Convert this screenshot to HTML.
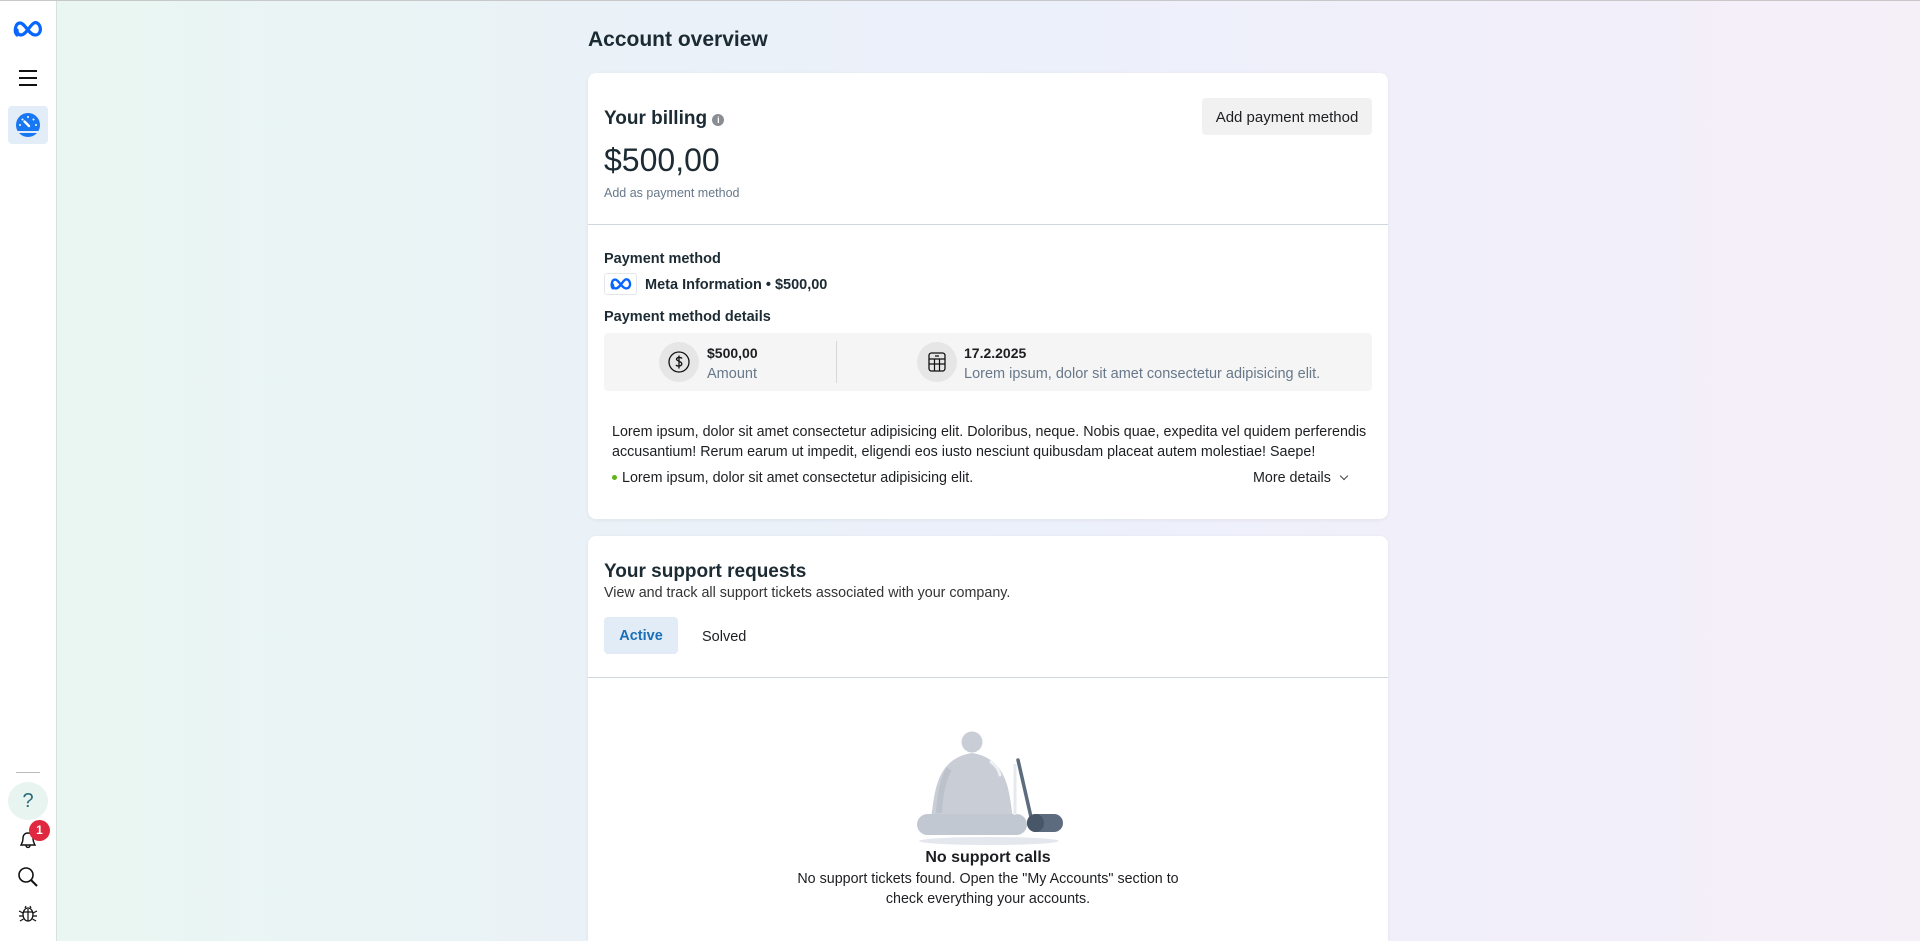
<!DOCTYPE html>
<html><head><meta charset="utf-8">
<style>
*{box-sizing:border-box;margin:0;padding:0}
html{width:1920px;height:941px;overflow:hidden}
body{width:1920px;height:941px;overflow:hidden;font-family:"Liberation Sans","DejaVu Sans",sans-serif;color:#1c1e21;position:relative;
background:linear-gradient(90deg,#e9f7f1 0%,#eaf1f8 35%,#ecf0fb 55%,#f2effa 80%,#f5eff8 100%);}
.topline{position:absolute;left:0;top:0;width:1920px;height:1px;background:#c8c8c8}
.side{position:absolute;left:0;top:1px;width:57px;height:940px;background:#fff;border-right:1px solid #d6e2de}
.abs{position:absolute}
.card{position:absolute;left:588px;width:800px;background:#fff;border-radius:8px;box-shadow:0 1px 4px rgba(0,0,0,.06)}
.t{position:absolute;white-space:nowrap}
.c1 .t{margin-top:2px}
</style></head><body>
<div class="topline"></div>
<div class="side">
  <svg class="abs" style="left:13px;top:19px" width="30" height="18" viewBox="0 0 30 18"><path d="M4 15 C1 12 2 3 7 3 C12 3 16 15 22 15 C27 15 28 10 27 7 C26 3 23 2 21 3 C17 5 13 15 8 15 C5 15 4 12 4 10" fill="none" stroke="#0866ff" stroke-width="3.2" stroke-linecap="round"/></svg>
  <div class="abs" style="left:19px;top:69px;width:18px;height:2px;background:#111"></div>
  <div class="abs" style="left:19px;top:76px;width:18px;height:2px;background:#111"></div>
  <div class="abs" style="left:19px;top:83px;width:18px;height:2px;background:#111"></div>
  <div class="abs" style="left:8px;top:105px;width:40px;height:38px;background:#e3edf8;border-radius:4px"></div>
  <svg class="abs" style="left:15px;top:111px" width="26" height="26" viewBox="0 0 26 26"><circle cx="13" cy="13" r="12" fill="#1877f2"/><rect x="1" y="19" width="24" height="2" fill="#e3edf8"/><g fill="#fff"><circle cx="13" cy="5" r="1"/><circle cx="7.5" cy="7.5" r="1"/><circle cx="18.5" cy="7.5" r="1"/><circle cx="5" cy="13" r="1"/><circle cx="21" cy="13" r="1"/></g><path d="M9.5 9.5 L14 14" stroke="#fff" stroke-width="2.4" stroke-linecap="round"/></svg>
  <div class="abs" style="left:16px;top:771px;width:24px;height:1px;background:#bbb"></div>
  <div class="abs" style="left:8px;top:781px;width:40px;height:38px;background:#e7f4f0;border-radius:50%;color:#2b6c7a;font-size:20px;text-align:center;line-height:38px">?</div>
  <svg class="abs" style="left:17px;top:828px" width="22" height="22" viewBox="0 0 22 22"><path d="M4 16 C5 14 6 13 6 9 C6 6 8 4 11 4 C14 4 16 6 16 9 C16 13 17 14 18 16 Z M9 16.5 C9 19 13 19 13 16.5" fill="none" stroke="#111" stroke-width="1.4"/></svg>
  <div class="abs" style="left:29px;top:819px;width:21px;height:21px;border-radius:50%;background:#e0283e;color:#fff;font-size:12px;font-weight:bold;text-align:center;line-height:21px">1</div>
  <svg class="abs" style="left:16px;top:864px" width="24" height="24" viewBox="0 0 24 24"><circle cx="10" cy="10" r="7" fill="none" stroke="#111" stroke-width="1.6"/><path d="M15 15 L21 21" stroke="#111" stroke-width="2"/></svg>
  <svg class="abs" style="left:17px;top:901px" width="22" height="22" viewBox="0 0 22 22"><ellipse cx="11" cy="12.5" rx="5" ry="6.5" fill="none" stroke="#111" stroke-width="1.3"/><path d="M11 7 V19 M6 10 H16 M8 6 L9 4 M14 6 L13 4 M6 11 L2 9 M16 11 L20 9 M6 14 H2 M16 14 H20 M6.5 17 L3 19 M15.5 17 L19 19" stroke="#111" stroke-width="1.2" fill="none"/></svg>
</div>

<div class="t" style="left:588px;top:28px;font-size:21px;font-weight:bold;color:#1c2b33">Account overview</div>

<div class="card c1" style="top:73px;height:446px">
  <div class="t" style="left:16px;top:33px;font-size:19px;font-weight:bold;color:#1c2b33">Your billing <span style="display:inline-block;width:12px;height:12px;border-radius:50%;background:#8a8d91;vertical-align:1px;color:#fff;font-size:9px;text-align:center;line-height:12px">i</span></div>
  <div style="position:absolute;left:614px;top:25px;width:170px;height:37px;background:#f1f1f1;border-radius:4px;font-size:15px;text-align:center;line-height:39px">Add payment method</div>
  <div class="t" style="left:16px;top:67px;font-size:32px;color:#1c2b33">$500,00</div>
  <div class="t" style="left:16px;top:111px;font-size:12.5px;color:#67788a">Add as payment method</div>
  <div style="position:absolute;left:0;top:151px;width:800px;height:1px;background:#cfd6dd"></div>
  <div class="t" style="left:16px;top:176px;font-size:14.5px;font-weight:bold;color:#1c2b33">Payment method</div>
  <div style="position:absolute;left:16px;top:200px;width:33px;height:22px;border:1px solid #e4e6eb;border-radius:3px"></div>
  <svg class="abs" style="left:22px;top:204px" width="22" height="14" viewBox="0 0 30 18"><path d="M4 15 C1 12 2 3 7 3 C12 3 16 15 22 15 C27 15 28 10 27 7 C26 3 23 2 21 3 C17 5 13 15 8 15 C5 15 4 12 4 10" fill="none" stroke="#0866ff" stroke-width="3.2" stroke-linecap="round"/></svg>
  <div class="t" style="left:57px;top:202px;font-size:14.5px;font-weight:bold;color:#1c2b33">Meta Information • $500,00</div>
  <div class="t" style="left:16px;top:234px;font-size:14.5px;font-weight:bold;color:#1c2b33">Payment method details</div>
  <div style="position:absolute;left:16px;top:260px;width:768px;height:58px;background:#f5f5f5;border-radius:4px">
    <div style="position:absolute;left:55px;top:9px;width:40px;height:40px;border-radius:50%;background:#e6e6e6"></div>
    <svg class="abs" style="left:63px;top:17px" width="24" height="24" viewBox="0 0 24 24"><circle cx="12" cy="12" r="10" fill="none" stroke="#111" stroke-width="1.3"/><path d="M15 8.5 C14 7 10 7 9.5 9 C9 11 15 11 14.8 14 C14.5 16.5 10 16.5 9 15 M12 5.5 V18.5" fill="none" stroke="#111" stroke-width="1.3"/></svg>
    <div class="t" style="left:103px;top:10px;font-size:14px;font-weight:bold">$500,00</div>
    <div class="t" style="left:103px;top:31px;font-size:14.5px;color:#67788a">Amount</div>
    <div style="position:absolute;left:232px;top:8px;width:1px;height:42px;background:#d8d8d8"></div>
    <div style="position:absolute;left:313px;top:9px;width:40px;height:40px;border-radius:50%;background:#e6e6e6"></div>
    <svg class="abs" style="left:322px;top:18px" width="22" height="22" viewBox="0 0 22 22"><rect x="3" y="2" width="16" height="18" rx="2.5" fill="none" stroke="#111" stroke-width="1.3"/><path d="M3 8 H19 M3 13 H19 M8.5 8 V20 M13.5 8 V20 M9 5 H13" stroke="#111" stroke-width="1.2" fill="none"/></svg>
    <div class="t" style="left:360px;top:10px;font-size:14px;font-weight:bold">17.2.2025</div>
    <div class="t" style="left:360px;top:31px;font-size:14.5px;color:#67788a">Lorem ipsum, dolor sit amet consectetur adipisicing elit.</div>
  </div>
  <div class="t" style="left:24px;top:347px;font-size:14.3px;line-height:20px">Lorem ipsum, dolor sit amet consectetur adipisicing elit. Doloribus, neque. Nobis quae, expedita vel quidem perferendis<br>accusantium! Rerum earum ut impedit, eligendi eos iusto nesciunt quibusdam placeat autem molestiae! Saepe!</div>
  <div style="position:absolute;left:24px;top:402px;width:5px;height:5px;border-radius:50%;background:#5fb319"></div>
  <div class="t" style="left:34px;top:395px;font-size:14.3px">Lorem ipsum, dolor sit amet consectetur adipisicing elit.</div>
  <div class="t" style="left:665px;top:395px;font-size:14.3px">More details <span style="display:inline-block;width:6px;height:6px;border-right:1.4px solid #444;border-bottom:1.4px solid #444;transform:rotate(45deg);margin-left:6px;vertical-align:3px"></span></div>
</div>

<div class="card" style="top:536px;height:405px;border-radius:8px 8px 0 0">
  <div class="t" style="left:16px;top:25px;font-size:19px;font-weight:bold;color:#1c2b33">Your support requests</div>
  <div class="t" style="left:16px;top:49px;font-size:14.3px;color:#333">View and track all support tickets associated with your company.</div>
  <div style="position:absolute;left:16px;top:81px;width:74px;height:37px;background:#e1ecf7;border-radius:4px;color:#1a6fb8;font-weight:bold;font-size:14.5px;text-align:center;line-height:39px">Active</div>
  <div class="t" style="left:114px;top:93px;font-size:14.5px">Solved</div>
  <div style="position:absolute;left:0;top:141px;width:800px;height:1px;background:#cfd6dd"></div>
  <svg class="abs" style="left:323px;top:193px" width="155" height="118" viewBox="0 0 155 118">
    <ellipse cx="78" cy="112" rx="70" ry="4" fill="#e4e8ee"/>
    <circle cx="61" cy="13" r="10.5" fill="#c9ced6"/>
    <path d="M20 88 C24 70 22 30 61 24 C100 30 98 70 102 88 Z" fill="#c9ced6"/>
    <path d="M38 40 C30 55 29 70 28 84" stroke="#b3bac4" stroke-width="6" fill="none" opacity=".6"/>
    <path d="M80 33 C86 37 88 42 89 46" stroke="#eef0f3" stroke-width="3" fill="none" stroke-linecap="round"/>
    <rect x="6" y="85" width="110" height="21" rx="10.5" fill="#c2c8d1"/>
    <path d="M107 31 L120 88" stroke="#5c6b7d" stroke-width="3.5" stroke-linecap="round"/>
    <path d="M104 35 L104 86" stroke="#e6e9ee" stroke-width="3"/>
    <rect x="116" y="85" width="36" height="18" rx="9" fill="#5c6b7d"/>
    <rect x="116" y="85" width="17" height="18" rx="8.5" fill="#485768"/>
  </svg>
  <div class="t" style="left:0;width:800px;text-align:center;top:313px;font-size:16px;font-weight:bold">No support calls</div>
  <div class="t" style="left:0;width:800px;text-align:center;top:334px;font-size:14.3px;line-height:19.5px">No support tickets found. Open the "My Accounts" section to<br>check everything your accounts.</div>
</div>
</body></html>
